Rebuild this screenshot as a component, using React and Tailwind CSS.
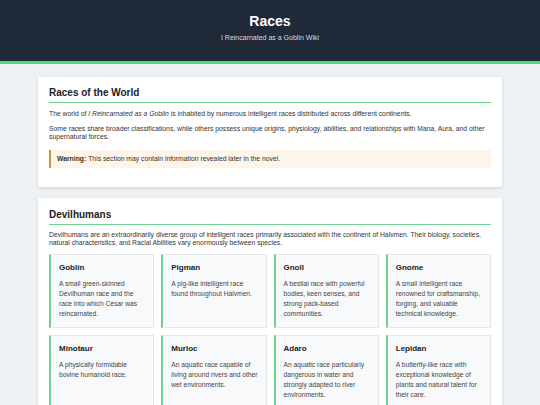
import React from "react";

const races1 = [
  { name: "Goblin", text: "A small green-skinned Devilhuman race and the race into which César was reincarnated." },
  { name: "Pigman", text: "A pig-like intelligent race found throughout Halvmen." },
  { name: "Gnoll", text: "A bestial race with powerful bodies, keen senses, and strong pack-based communities." },
  { name: "Gnome", text: "A small intelligent race renowned for craftsmanship, forging, and valuable technical knowledge." },
  { name: "Minotaur", text: "A physically formidable bovine humanoid race." },
  { name: "Murloc", text: "An aquatic race capable of living around rivers and other wet environments." },
  { name: "Adaro", text: "An aquatic race particularly dangerous in water and strongly adapted to river environments." },
  { name: "Lepidan", text: "A butterfly-like race with exceptional knowledge of plants and natural talent for their care." },
];

function RaceCard({ name, text }) {
  return (
    <div className="bg-[#f8f9fa] border border-[#e3e6ea] border-l-2 border-l-[#6fd293] pl-[8px] pr-[8px] pt-[8px] pb-[8px] min-h-[73px]">
      <div className="text-[8px] leading-[10px] font-bold text-[#222]">{name}</div>
      <p className="mt-[6px] text-[6.7px] leading-[10px] text-[#444]">{text}</p>
    </div>
  );
}

export default function App() {
  return (
    <div className="min-h-[405px] bg-[#eef1f4] font-['Liberation_Sans',Arial,sans-serif]">
      <header className="bg-[#1f2937] border-b-[3px] border-[#4ade80] h-[64px] flex flex-col items-center pt-[11px]">
        <h1 className="text-[14px] leading-[20px] font-bold text-white">Races</h1>
        <div className="mt-[2px] text-[7px] leading-[10px] text-[#d7dbe0]">I Reincarnated as a Goblin Wiki</div>
      </header>
      <main className="px-[38px] pt-[13px] flex flex-col gap-[11px]">
        <section className="bg-white shadow-[0_1px_3px_rgba(0,0,0,0.12)] px-[11px] pt-[10px] pb-[19px]">
          <h2 className="text-[10px] leading-[12px] font-bold text-[#222] pb-[3px] border-b border-[#6fd293]">Races of the World</h2>
          <p className="mt-[7px] text-[6.8px] leading-[8px] text-[#333]">
            The world of <i>I Reincarnated as a Goblin</i> is inhabited by numerous intelligent races distributed across different continents.
          </p>
          <p className="mt-[7px] text-[6.8px] leading-[8px] text-[#333]">
            Some races share broader classifications, while others possess unique origins, physiology, abilities, and relationships with Mana, Aura, and other supernatural forces.
          </p>
          <div className="mt-[9px] bg-[#fdf5e9] border-l-2 border-[#d68f2e] h-[18px] flex items-center pl-[6px] text-[6.8px] text-[#333]">
            <b className="mr-[2px]">Warning:</b> This section may contain information revealed later in the novel.
          </div>
        </section>
        <section className="bg-white shadow-[0_1px_3px_rgba(0,0,0,0.12)] px-[11px] pt-[11px] pb-[11px]">
          <h2 className="text-[10px] leading-[12px] font-bold text-[#222] pb-[3px] border-b border-[#6fd293]">Devilhumans</h2>
          <p className="mt-[6px] text-[6.8px] leading-[8px] text-[#333]">
            Devilhumans are an extraordinarily diverse group of intelligent races primarily associated with the continent of Halvmen. Their biology, societies, natural characteristics, and Racial Abilities vary enormously between species.
          </p>
          <div className="mt-[7px] grid grid-cols-4 gap-[7px]">
            {races1.map((r) => (
              <RaceCard key={r.name} {...r} />
            ))}
          </div>
        </section>
      </main>
    </div>
  );
}
